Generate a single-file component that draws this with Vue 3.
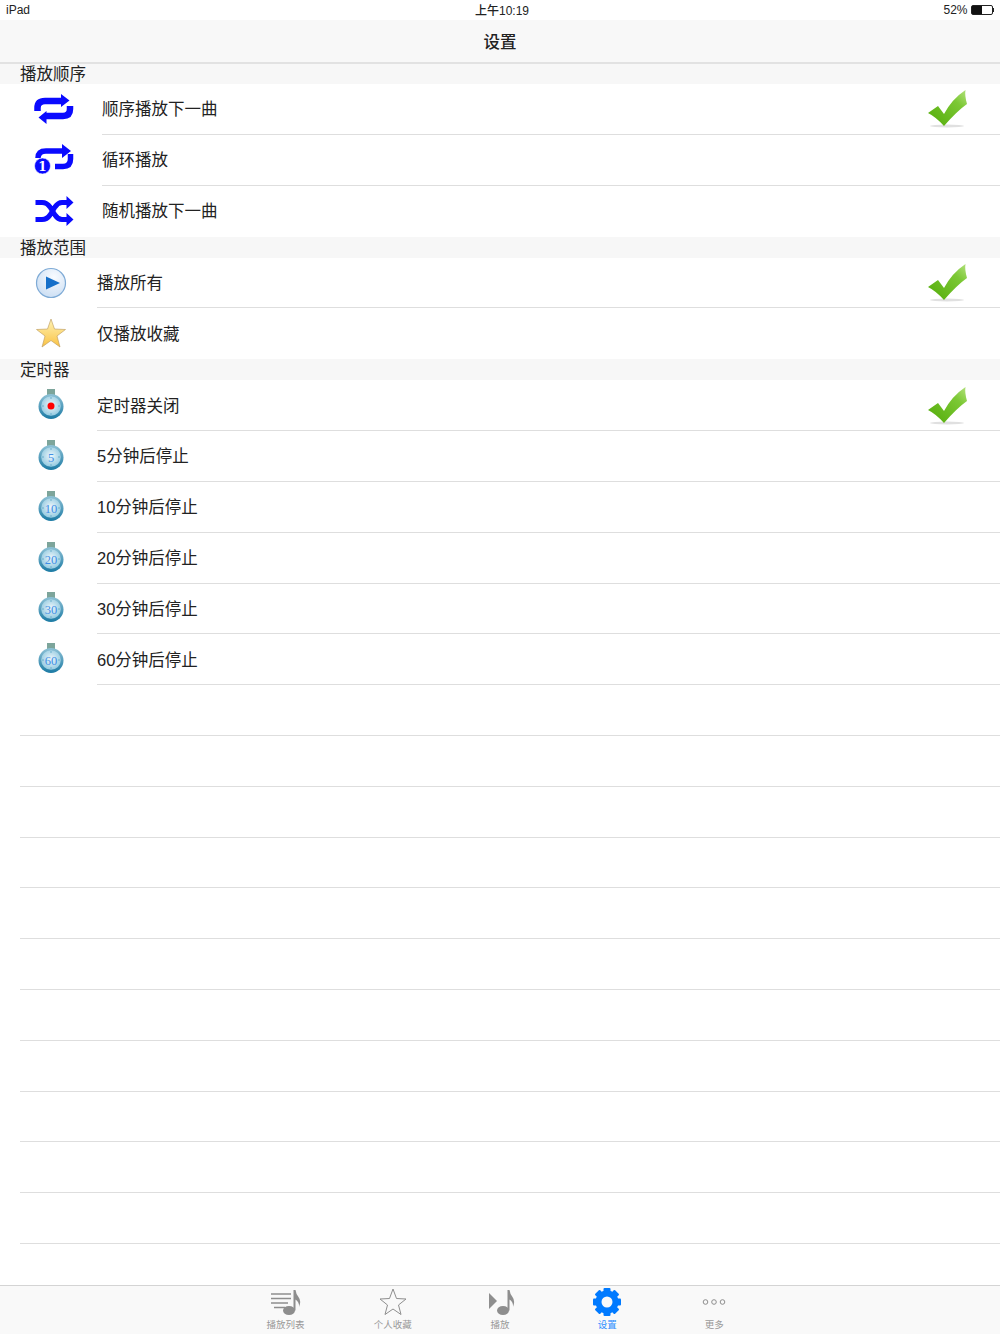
<script setup>
const orderRows = [
  { icon: 'repeat', label: '顺序播放下一曲', checked: true },
  { icon: 'repeatOne', label: '循环播放' },
  { icon: 'shuffle', label: '随机播放下一曲' }
]
const rangeRows = [
  { icon: 'play', label: '播放所有', checked: true },
  { icon: 'star', label: '仅播放收藏' }
]
const timerRows = [
  { mark: '', label: '定时器关闭', checked: true },
  { mark: '5', label: '5分钟后停止' },
  { mark: '10', label: '10分钟后停止' },
  { mark: '20', label: '20分钟后停止' },
  { mark: '30', label: '30分钟后停止' },
  { mark: '60', label: '60分钟后停止' }
]
const teeth = [0, 45, 90, 135, 180, 225, 270, 315]
</script>

<template>
  <div class="page">
    <svg class="defs" width="0" height="0" aria-hidden="true">
      <defs>
        <linearGradient id="checkFill" x1="1" y1="0" x2="0" y2="1">
          <stop offset="0" stop-color="#b4e27e" />
          <stop offset="0.3" stop-color="#7cc835" />
          <stop offset="1" stop-color="#52ab08" />
        </linearGradient>
        <linearGradient id="starFill" x1="0" y1="0" x2="0" y2="1">
          <stop offset="0" stop-color="#fff3b4" />
          <stop offset="1" stop-color="#f9c244" />
        </linearGradient>
        <radialGradient id="playFill" cx="0.6" cy="0.3" r="0.8">
          <stop offset="0" stop-color="#f8fbff" />
          <stop offset="1" stop-color="#c8dcf2" />
        </radialGradient>
        <linearGradient id="watchRing" x1="0" y1="0" x2="0" y2="1">
          <stop offset="0" stop-color="#8fc2d6" />
          <stop offset="1" stop-color="#1b7aa4" />
        </linearGradient>
        <radialGradient id="watchFace" cx="0.5" cy="0.45" r="0.6">
          <stop offset="0" stop-color="#eef7fb" />
          <stop offset="1" stop-color="#8cc6de" />
        </radialGradient>
      </defs>
    </svg>

    <div class="status-bar">
      <span class="status-left">iPad</span>
      <span class="status-time">上午10:19</span>
      <div class="status-right">
        <span>52%</span>
        <div class="battery"><div class="battery-level"></div></div>
        <div class="battery-cap"></div>
      </div>
    </div>

    <div class="nav-bar">设置</div>

    <div class="list">
      <div class="section-title first">播放顺序</div>
      <div v-for="(row, i) in orderRows" :key="row.label" class="row">
        <div class="row-icon wide">
          <svg v-if="row.icon === 'repeat'" width="40" height="32" viewBox="0 0 40 32">
            <path d="M3.500 18 V15 Q3.500 8 11 8 H28 M36 13 V16 Q36 23 29 23 H12" fill="none" stroke="#0a0aff" stroke-width="6.500" />
            <path d="M27 1 L35.500 7.500 L27 14 Z M12.500 18 L4.500 24.500 L12.500 31 Z" fill="#0a0aff" />
          </svg>
          <svg v-else-if="row.icon === 'repeatOne'" width="40" height="32" viewBox="0 0 40 32">
            <path d="M4 14 Q4 7 12 7 H28 M36.500 10 V15 Q36.500 22.500 29 22.500 H21" fill="none" stroke="#0a0aff" stroke-width="5.500" />
            <path d="M28 0 L37 7 L28 14 Z" fill="#0a0aff" />
            <circle cx="8.500" cy="22" r="8" fill="#0a0aff" stroke="#fff" stroke-width="0.600" />
            <text x="8.500" y="26.500" class="repeat-num">1</text>
          </svg>
          <svg v-else width="40" height="32" viewBox="0 0 40 32">
            <path d="M1.500 7.500 H8 Q13 7.500 16 12 L21 20 Q24 24.500 28 24.500 H34 M1.500 24.500 H8 Q13 24.500 16 20 L21 12 Q24 7.500 28 7.500 H34" fill="none" stroke="#0a0aff" stroke-width="5" />
            <path d="M32.500 1 L39.500 7.500 L32.500 14 Z M32.500 18 L39.500 24.500 L32.500 31 Z" fill="#0a0aff" />
          </svg>
        </div>
        <div class="row-body" :class="{ 'no-line': i === orderRows.length - 1 }">
          <span>{{ row.label }}</span>
          <svg v-if="row.checked" class="check" width="42" height="40" viewBox="0 0 42 40">
            <ellipse cx="20" cy="37" rx="17" ry="1.500" fill="#000" opacity="0.12" />
            <path d="M1 24 L11 17 L17 25 Q25 10 38.500 1 Q37.500 6 40 15 Q30 22 17 37 Q9 28 1 24 Z" fill="url(#checkFill)" />
          </svg>
        </div>
      </div>

      <div class="section-title">播放范围</div>
      <div v-for="(row, i) in rangeRows" :key="row.label" class="row">
        <div class="row-icon">
          <svg v-if="row.icon === 'play'" width="32" height="32" viewBox="0 0 32 32">
            <circle cx="16" cy="16" r="14.500" fill="url(#playFill)" stroke="#7fabd6" stroke-width="1.200" />
            <path d="M11 9.500 L25 16 L11 22.500 Z" fill="#156fc9" />
          </svg>
          <svg v-else width="32" height="32" viewBox="0 0 32 32">
            <path d="M16 2 L19.500 12 L30.500 12.500 L22 19 L25 30 L16 23.500 L7 30 L10 19 L1.500 12.500 L12.500 12 Z" fill="url(#starFill)" stroke="#b8975a" stroke-width="0.600" />
          </svg>
        </div>
        <div class="row-body" :class="{ 'no-line': i === rangeRows.length - 1 }">
          <span>{{ row.label }}</span>
          <svg v-if="row.checked" class="check" width="42" height="40" viewBox="0 0 42 40">
            <ellipse cx="20" cy="37" rx="17" ry="1.500" fill="#000" opacity="0.12" />
            <path d="M1 24 L11 17 L17 25 Q25 10 38.500 1 Q37.500 6 40 15 Q30 22 17 37 Q9 28 1 24 Z" fill="url(#checkFill)" />
          </svg>
        </div>
      </div>

      <div class="section-title">定时器</div>
      <div v-for="row in timerRows" :key="row.label" class="row">
        <div class="row-icon">
          <svg width="30" height="32" viewBox="0 0 30 32">
            <rect x="11" y="0" width="8" height="6" fill="#7da59b" />
            <circle cx="15" cy="17.500" r="12.500" fill="url(#watchRing)" />
            <circle cx="15" cy="17" r="9.800" fill="url(#watchFace)" />
            <path d="M15 8 V10 M15 24 V26 M6 17 H8 M22 17 H24" stroke="#6db0cc" stroke-width="1" />
            <circle v-if="!row.mark" cx="15" cy="17" r="3.500" fill="#f00" />
            <text v-else x="15" y="21.500" class="watch-num">{{ row.mark }}</text>
          </svg>
        </div>
        <div class="row-body">
          <span>{{ row.label }}</span>
          <svg v-if="row.checked" class="check" width="42" height="40" viewBox="0 0 42 40">
            <ellipse cx="20" cy="37" rx="17" ry="1.500" fill="#000" opacity="0.12" />
            <path d="M1 24 L11 17 L17 25 Q25 10 38.500 1 Q37.500 6 40 15 Q30 22 17 37 Q9 28 1 24 Z" fill="url(#checkFill)" />
          </svg>
        </div>
      </div>

      <div v-for="n in 11" :key="n" class="empty-row"></div>
    </div>

    <div class="tab-bar">
      <div class="tab">
        <svg width="32" height="30" viewBox="0 0 32 30">
          <path d="M1 7 H21 M1 11.500 H21 M1 16 H18 M4 20.500 H15" stroke="#8e8e8e" stroke-width="1.600" />
          <ellipse cx="19" cy="23.500" rx="6" ry="4.500" fill="#8e8e8e" />
          <path d="M23.500 23.500 V3 H25.500 Q26 7 28.500 10 Q31.500 14 29 20 Q29.500 15 25.500 12.500 V23.500 Z" fill="#8e8e8e" />
        </svg>
        <span>播放列表</span>
      </div>
      <div class="tab">
        <svg width="32" height="30" viewBox="0 0 32 30">
          <path d="M16 2 L19.500 11.500 L29 12 L21.500 18 L24 27.500 L16 22 L8 27.500 L10.500 18 L3 12 L12.500 11.500 Z" fill="none" stroke="#8e8e8e" stroke-width="1" />
        </svg>
        <span>个人收藏</span>
      </div>
      <div class="tab">
        <svg width="32" height="30" viewBox="0 0 32 30">
          <path d="M5 6 L13 14 L5 22 Z" fill="#8e8e8e" />
          <ellipse cx="19" cy="23.500" rx="6" ry="4.500" fill="#8e8e8e" />
          <path d="M23.500 23.500 V3 H25.500 Q26 7 28.500 10 Q31.500 14 29 20 Q29.500 15 25.500 12.500 V23.500 Z" fill="#8e8e8e" />
        </svg>
        <span>播放</span>
      </div>
      <div class="tab active">
        <svg width="32" height="30" viewBox="0 0 32 30">
          <rect v-for="deg in teeth" :key="deg" x="12.500" y="1" width="7" height="6" rx="1" fill="#007aff" :transform="`rotate(${deg} 16 15)`" />
          <circle cx="16" cy="15" r="8.500" fill="none" stroke="#007aff" stroke-width="6" />
        </svg>
        <span>设置</span>
      </div>
      <div class="tab">
        <svg width="32" height="30" viewBox="0 0 32 30">
          <circle cx="7.500" cy="15" r="2.300" fill="none" stroke="#8e8e8e" stroke-width="1" />
          <circle cx="16" cy="15" r="2.300" fill="none" stroke="#8e8e8e" stroke-width="1" />
          <circle cx="24.500" cy="15" r="2.300" fill="none" stroke="#8e8e8e" stroke-width="1" />
        </svg>
        <span>更多</span>
      </div>
    </div>
  </div>
</template>

<style scoped>
.page {
  position: relative;
  display: flex;
  flex-direction: column;
  width: 1000px;
  height: 1334px;
  overflow: hidden;
  background: #fff;
  color: #222;
  font-family: "Liberation Sans", "Noto Sans CJK SC", sans-serif;
}

.defs {
  position: absolute;
}

.status-bar {
  display: flex;
  align-items: center;
  justify-content: space-between;
  height: 20px;
  padding: 0 6px;
  font-size: 12px;
  position: relative;
}

.status-time {
  position: absolute;
  left: 475px;
  top: 1px;
  font-weight: 500;
}

.status-right {
  display: flex;
  align-items: center;
  gap: 3px;
}

.battery {
  width: 20px;
  height: 8px;
  border: 1px solid #222;
  border-radius: 2px;
}

.battery-level {
  width: 52%;
  height: 100%;
  background: #111;
}

.battery-cap {
  width: 1.500px;
  height: 4px;
  margin-left: -3px;
  background: #222;
}

.nav-bar {
  display: flex;
  align-items: center;
  justify-content: center;
  height: 42px;
  background: #f8f8f8;
  border-bottom: 2px solid #e2e2e2;
  font-size: 16.500px;
  font-weight: 500;
}

.list {
  flex: 1;
  min-height: 0;
}

.section-title {
  height: 21.100px;
  line-height: 22px;
  padding-left: 20px;
  background: #f7f7f7;
  font-size: 16.500px;
}

.section-title.first {
  height: 20.200px;
  line-height: 21px;
}

.row {
  display: flex;
  height: 50.800px;
}

.row-icon {
  display: flex;
  align-items: center;
  justify-content: center;
  flex: none;
  width: 93px;
  padding: 0 0 1px 4px;
  box-sizing: content-box;
  height: calc(100% - 1px);
}

.row-icon.wide {
  width: 97px;
  padding-left: 5px;
}

.row-body {
  flex: 1;
  display: flex;
  align-items: center;
  justify-content: space-between;
  padding: 0 31px 1.400px 0;
  border-bottom: 1px solid #dedede;
  font-size: 16.500px;
}

.row-body.no-line {
  border-bottom: none;
}

.check {
  flex: none;
  margin-top: 2px;
}

.repeat-num {
  font-family: "DejaVu Serif", serif;
  font-size: 12px;
  font-weight: 700;
  fill: #fff;
  text-anchor: middle;
}

.watch-num {
  font-family: "Liberation Serif", serif;
  font-size: 12.500px;
  fill: #3f8fe6;
  text-anchor: middle;
}

.empty-row {
  height: 50.800px;
  margin-left: 20px;
  border-bottom: 1px solid #dedede;
  box-sizing: border-box;
}

.tab-bar {
  display: flex;
  justify-content: center;
  flex: none;
  height: 49px;
  box-sizing: border-box;
  background: #f9f9f9;
  border-top: 1px solid #d4d4d4;
}

.tab {
  display: flex;
  flex-direction: column;
  align-items: center;
  width: 107.200px;
  padding-top: 1px;
  font-size: 9.500px;
  color: #999;
}

.tab span {
  margin-top: 2px;
  line-height: 12px;
}

.tab.active {
  color: #2f8fff;
}
</style>
